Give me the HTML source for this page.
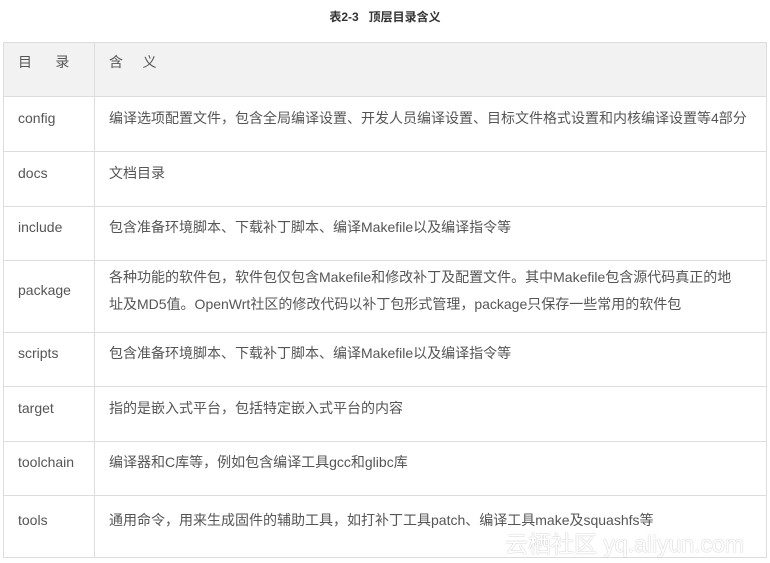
<!DOCTYPE html><html><head><meta charset="utf-8"><style>
body{margin:0;width:770px;height:563px;background:#fff;font-family:"Liberation Sans","Noto Sans CJK SC",sans-serif;color:#555;position:relative;overflow:hidden}
.t{position:absolute;top:8px;left:0;width:770px;text-align:center;font-size:12px;font-weight:bold;color:#333}
table{position:absolute;left:3px;top:42px;width:764px;border-collapse:collapse;font-size:14px}
td{border:1px solid #ddd;padding:0 10px 12px 14px;vertical-align:middle;line-height:27px}
td:first-child{width:66px}
tr.h td{background:#f2f2f2;padding-bottom:15px}
.wm{position:absolute;left:505px;top:525px;font-size:23px;color:#fff;white-space:nowrap;text-shadow:0 0 1px #bbb,0 0 1px #bbb}
</style></head><body>
<div class="t">表2-3&nbsp;&nbsp;&nbsp;顶层目录含义</div>
<table>
<tr class="h" style="height:54px"><td>目&nbsp;&nbsp;&nbsp;&nbsp;&nbsp;&nbsp;录</td><td>含&nbsp;&nbsp;&nbsp;&nbsp;&nbsp;义</td></tr>
<tr style="height:55px"><td>config</td><td>编译选项配置文件，包含全局编译设置、开发人员编译设置、目标文件格式设置和内核编译设置等4部分</td></tr>
<tr style="height:55px"><td>docs</td><td>文档目录</td></tr>
<tr style="height:54px"><td>include</td><td>包含准备环境脚本、下载补丁脚本、编译Makefile以及编译指令等</td></tr>
<tr style="height:72px"><td>package</td><td>各种功能的软件包，软件包仅包含Makefile和修改补丁及配置文件。其中Makefile包含源代码真正的地<br>址及MD5值。OpenWrt社区的修改代码以补丁包形式管理，package只保存一些常用的软件包</td></tr>
<tr style="height:54px"><td>scripts</td><td>包含准备环境脚本、下载补丁脚本、编译Makefile以及编译指令等</td></tr>
<tr style="height:55px"><td>target</td><td>指的是嵌入式平台，包括特定嵌入式平台的内容</td></tr>
<tr style="height:54px"><td>toolchain</td><td>编译器和C库等，例如包含编译工具gcc和glibc库</td></tr>
<tr style="height:62px"><td>tools</td><td>通用命令，用来生成固件的辅助工具，如打补丁工具patch、编译工具make及squashfs等</td></tr>
</table>
<div class="wm">云栖社区 yq.aliyun.com</div>
</body></html>
